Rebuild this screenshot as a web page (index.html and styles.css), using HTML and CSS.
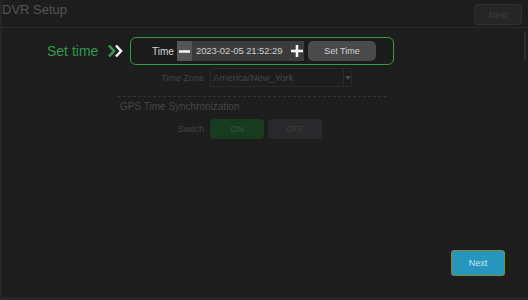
FILE: index.html
```html
<!DOCTYPE html>
<html>
<head>
<meta charset="utf-8">
<link rel="stylesheet" href="styles.css">
</head>
<body>
<div class="app">
  <header class="topbar">
    <div class="title">DVR Setup</div>
    <button class="btn-top">Next</button>
  </header>
  <main class="main">
    <div class="scroll-thumb"></div>
    <div class="step-row">
      <span class="step-label">Set time</span>
      <svg class="chev" width="16" height="14" viewBox="0 0 16 14">
        <path d="M1 1.5 L6 7 L1 12.5" fill="none" stroke="#2e9a52" stroke-width="2.6"/>
        <path d="M8 1.5 L13 7 L8 12.5" fill="none" stroke="#f2f2f2" stroke-width="2.6"/>
      </svg>
      <div class="highlight">
        <span class="hl-label">Time</span>
        <div class="stepper">
          <span class="step-btn minus"><svg width="11" height="11" viewBox="0 0 11 11"><rect x="0" y="4.2" width="11" height="2.6" fill="#eeeeee"/></svg></span>
          <span class="date">2023-02-05 21:52:29</span>
          <span class="step-btn plus"><svg width="12" height="12" viewBox="0 0 12 12"><rect x="0" y="4.7" width="12" height="2.6" fill="#f2f2f2"/><rect x="4.7" y="0" width="2.6" height="12" fill="#f2f2f2"/></svg></span>
        </div>
        <button class="btn-set">Set Time</button>
      </div>
    </div>
    <div class="form">
      <div class="row tz-row">
        <span class="lbl">Time Zone</span>
        <div class="select">
          <span>America/New_York</span>
          <span class="caret"><svg width="6" height="4" viewBox="0 0 6 4"><path d="M0 0 L6 0 L3 4 Z" fill="#4a4a4a"/></svg></span>
        </div>
      </div>
      <div class="divider"></div>
      <div class="section-title">GPS Time Synchronization</div>
      <div class="row sw-row">
        <span class="lbl">Switch</span>
        <div class="seg">
          <span class="seg-on">ON</span>
          <span class="seg-off">OFF</span>
        </div>
      </div>
    </div>
  </main>
  <footer class="footer">
    <button class="btn-next">Next</button>
  </footer>
</div>
</body>
</html>
```
FILE: styles.css
```css
* { box-sizing: border-box; }
html, body { margin: 0; padding: 0; background: #1c1c1c; }
body { font-family: "Liberation Sans", Arial, sans-serif; }
.app {
  width: 528px;
  height: 300px;
  display: flex;
  flex-direction: column;
  background: #1d1d1d;
  border-left: 2px solid #262626;
  border-bottom: 3px solid #262626;
}
.topbar {
  height: 28px;
  flex: none;
  display: flex;
  justify-content: space-between;
  align-items: flex-start;
  border-bottom: 1px solid #2a2a2a;
  padding: 0 6px 0 0;
}
.title {
  font-size: 13px;
  line-height: 16px;
  color: #555555;
  padding-top: 2px;
}
.btn-top {
  margin-top: 4px;
  width: 48px;
  height: 21px;
  background: #262626;
  border: 1px solid #303030;
  border-radius: 4px;
  color: #3e3e3e;
  font: 9px "Liberation Sans", Arial, sans-serif;
  padding: 0;
}
.main {
  flex: 1;
  position: relative;
}
.scroll-thumb {
  position: absolute;
  right: 2px;
  top: 4px;
  width: 2px;
  height: 28px;
  background: #2e2e2e;
}
.step-row {
  display: flex;
  align-items: center;
  margin: 9px 0 0 45px;
  height: 28px;
}
.step-label {
  font-size: 14px;
  color: #2e9a52;
  width: 61px;
}
.chev { margin-right: 6px; }
.highlight {
  display: flex;
  align-items: center;
  width: 264px;
  height: 28px;
  border: 1.5px solid #2f9d4c;
  border-radius: 6px;
  background: #1b1b1b;
  padding-left: 21px;
}
.hl-label {
  font-size: 10px;
  color: #d8d8d8;
  width: 25px;
}
.stepper {
  display: flex;
  height: 20px;
  background: #3c3c3c;
}
.step-btn {
  width: 15px;
  display: flex;
  align-items: center;
  justify-content: center;
}
.minus { background: #555555; }
.plus { background: #3c3c3c; }
.date {
  width: 97px;
  font-size: 9.5px;
  line-height: 20px;
  color: #cfcfcf;
  padding-left: 4px;
  background: #3a3a3a;
  letter-spacing: -0.1px;
}
.btn-set {
  margin-left: 4px;
  width: 68px;
  height: 20px;
  background: #4a4a4a;
  border: none;
  border-radius: 5px;
  color: #d0d0d0;
  font: 9px "Liberation Sans", Arial, sans-serif;
  padding: 0;
}
.form {
  margin-left: 120px;
  width: 270px;
}
.row {
  display: flex;
  align-items: center;
}
.lbl {
  width: 88px;
  text-align: right;
  padding-right: 6px;
  font-size: 9px;
  color: #444444;
}
.tz-row { margin-top: 3px; height: 19px; }
.select {
  width: 142px;
  height: 19px;
  border: 1px solid #292929;
  border-radius: 2px;
  display: flex;
  align-items: center;
  justify-content: space-between;
  font-size: 9.5px;
  color: #474747;
  padding-left: 2px;
}
.caret {
  height: 17px;
  width: 8px;
  border-left: 1px solid #2c2c2c;
  display: flex;
  align-items: center;
  justify-content: center;
}
.divider {
  margin-top: 9px;
  margin-left: -4px;
  border-top: 1px dashed #333333;
  width: 268px;
}
.section-title {
  margin-top: 3px;
  margin-left: -2px;
  font-size: 10px;
  line-height: 14px;
  color: #464646;
}
.sw-row { margin-top: 5px; height: 20px; }
.seg { display: flex; gap: 4px; }
.seg-on, .seg-off {
  width: 54px;
  height: 20px;
  border-radius: 4px;
  font-size: 9px;
  line-height: 20px;
  text-align: center;
}
.seg-on { background: #183a1e; color: #2d5c34; }
.seg-off { background: #29292b; color: #3c3c3c; }
.footer {
  flex: none;
  display: flex;
  justify-content: flex-end;
  padding: 0 23px 21px 0;
}
.btn-next {
  width: 54px;
  height: 26px;
  background: #2596be;
  border: 1.5px solid #8a8a30;
  border-radius: 3px;
  color: #cde6f0;
  font: 9px "Liberation Sans", Arial, sans-serif;
  padding: 0;
}
```
